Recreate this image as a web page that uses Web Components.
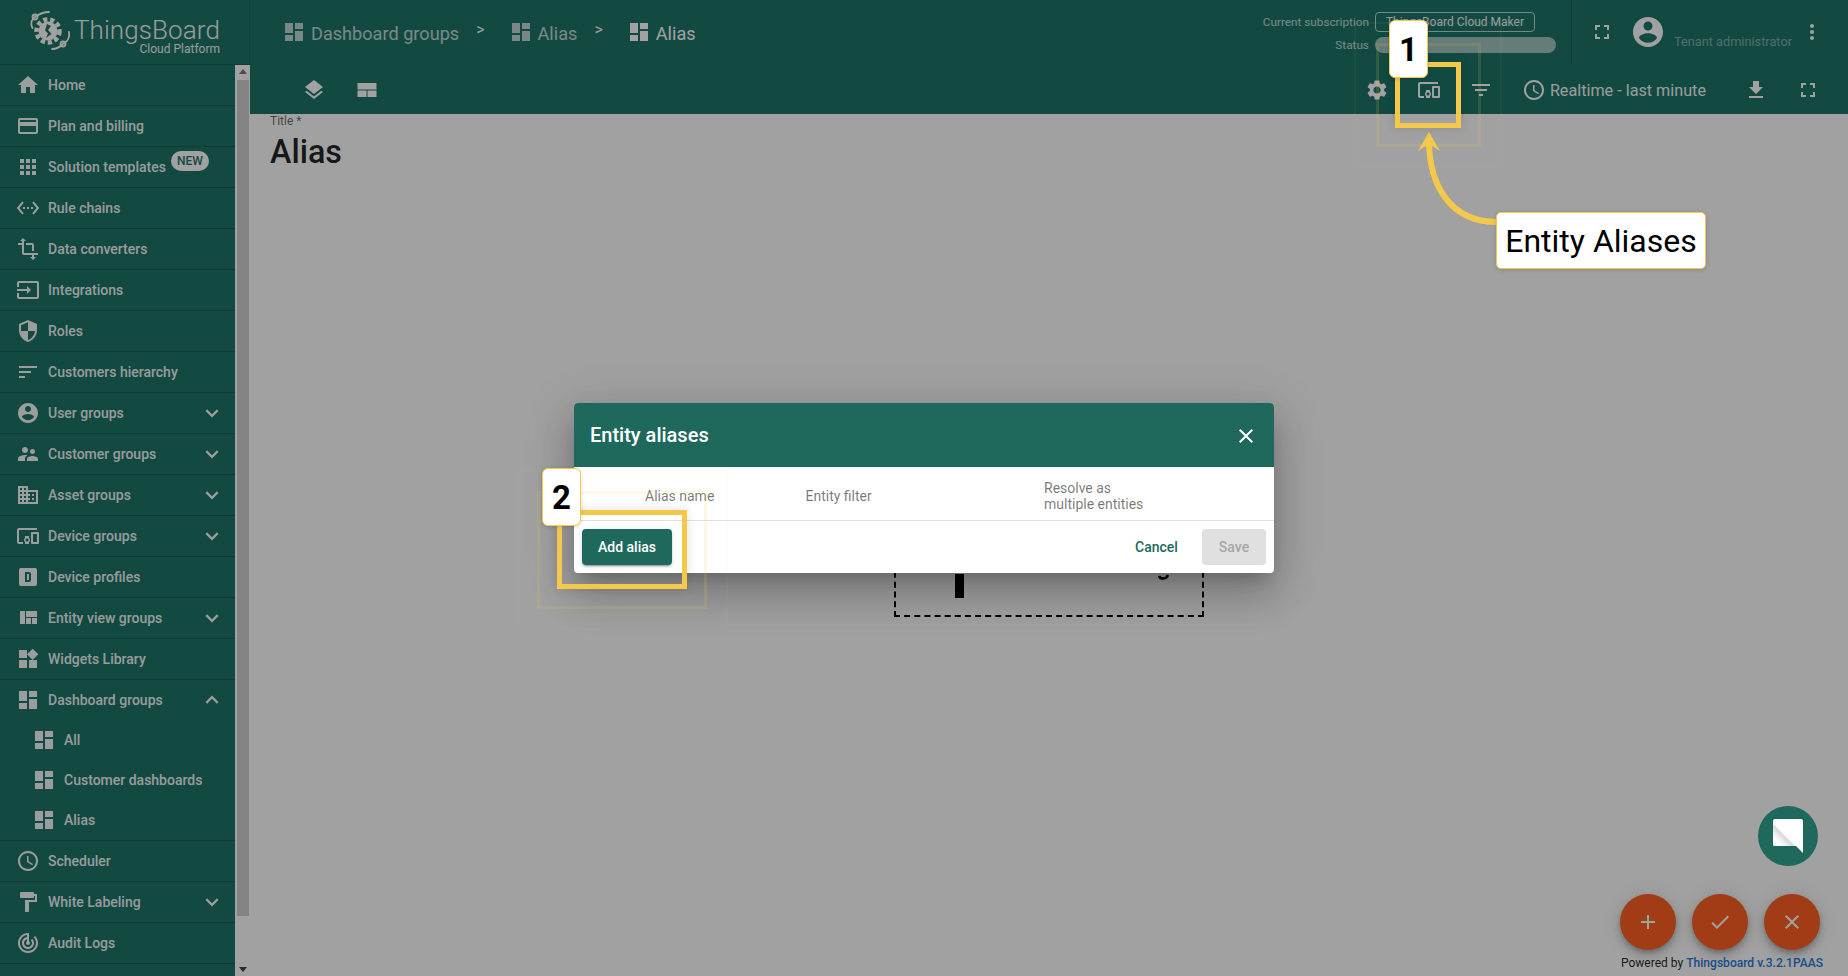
<!DOCTYPE html>
<html lang="en"><head><meta charset="utf-8"><title>Alias</title>
<style>
html,body{margin:0;padding:0;width:100%;height:100%;overflow:hidden;background:#fff;font-family:Roboto,"Liberation Sans",sans-serif}
</style></head><body>
<tb-app>
  <tb-sidebar>
    <tb-nav-item icon="home">Home</tb-nav-item>
    <tb-nav-item icon="card">Plan and billing</tb-nav-item>
    <tb-nav-item icon="apps" badge="NEW">Solution templates</tb-nav-item>
    <tb-nav-item icon="ethernet">Rule chains</tb-nav-item>
    <tb-nav-item icon="transform">Data converters</tb-nav-item>
    <tb-nav-item icon="input">Integrations</tb-nav-item>
    <tb-nav-item icon="security">Roles</tb-nav-item>
    <tb-nav-item icon="sort">Customers hierarchy</tb-nav-item>
    <tb-nav-item icon="account" chevron="more">User groups</tb-nav-item>
    <tb-nav-item icon="supervisor" chevron="more">Customer groups</tb-nav-item>
    <tb-nav-item icon="domain" chevron="more">Asset groups</tb-nav-item>
    <tb-nav-item icon="devices" chevron="more">Device groups</tb-nav-item>
    <tb-nav-item icon="dbox">Device profiles</tb-nav-item>
    <tb-nav-item icon="quilt" chevron="more">Entity view groups</tb-nav-item>
    <tb-nav-item icon="widgets">Widgets Library</tb-nav-item>
    <tb-nav-item icon="dashboard" chevron="less" flush>Dashboard groups</tb-nav-item>
    <tb-nav-item icon="dashboard" nested flush>All</tb-nav-item>
    <tb-nav-item icon="dashboard" nested flush>Customer dashboards</tb-nav-item>
    <tb-nav-item icon="dashboard" nested>Alias</tb-nav-item>
    <tb-nav-item icon="schedule">Scheduler</tb-nav-item>
    <tb-nav-item icon="paint" chevron="more">White Labeling</tb-nav-item>
    <tb-nav-item icon="track">Audit Logs</tb-nav-item>
    <tb-nav-item icon="card"></tb-nav-item>
  </tb-sidebar>
  <tb-toolbar></tb-toolbar>
  <tb-content></tb-content>
  <tb-backdrop></tb-backdrop>
  <tb-dialog></tb-dialog>
  <tb-chat></tb-chat>
  <tb-annotations></tb-annotations>
</tb-app>
<script>
const P={
home:'M10 20v-6h4v6h5v-8h3L12 3 2 12h3v8z',
card:'M20 4H4c-1.11 0-1.99.89-1.99 2L2 18c0 1.11.89 2 2 2h16c1.11 0 2-.89 2-2V6c0-1.11-.89-2-2-2zm0 14H4v-6h16v6zm0-10H4V6h16v2z',
apps:'M4 8h4V4H4v4zm6 12h4v-4h-4v4zm-6 0h4v-4H4v4zm0-6h4v-4H4v4zm6 0h4v-4h-4v4zm6-10v4h4V4h-4zm-6 4h4V4h-4v4zm6 6h4v-4h-4v4zm0 6h4v-4h-4v4z',
ethernet:'M7.77 6.76L6.23 5.48.82 12l5.41 6.52 1.54-1.28L3.42 12l4.35-5.24zM7 13h2v-2H7v2zm10-2h-2v2h2v-2zm-6 2h2v-2h-2v2zm6.77-7.52l-1.54 1.28L20.58 12l-4.35 5.24 1.54 1.28L23.18 12l-5.41-6.52z',
transform:'M22 18v-2H8V4h2L7 1 4 4h2v2H2v2h4v8c0 1.1.9 2 2 2h8v2h-2l3 3 3-3h-2v-2h4zM10 8h6v6h2V8c0-1.1-.9-2-2-2h-6v2z',
input:'M21 3.01H3c-1.1 0-2 .9-2 2V9h2V4.99h18v14.03H3V15H1v4.01c0 1.1.9 1.98 2 1.98h18c1.1 0 2-.88 2-1.98v-14c0-1.11-.9-2-2-2zM11 16l4-4-4-4v3H1v2h10v3z',
security:'M12 1L3 5v6c0 5.55 3.84 10.74 9 12 5.16-1.26 9-6.45 9-12V5l-9-4zm0 10.99h7c-.53 4.12-3.28 7.79-7 8.94V12H5V6.3l7-3.11v8.8z',
sort:'M3 18h6v-2H3v2zM3 6v2h18V6H3zm0 7h12v-2H3v2z',
account:'M12 2C6.48 2 2 6.48 2 12s4.48 10 10 10 10-4.48 10-10S17.52 2 12 2zm0 3c1.66 0 3 1.34 3 3s-1.34 3-3 3-3-1.34-3-3 1.34-3 3-3zm0 14.2c-2.5 0-4.71-1.28-6-3.22.03-1.99 4-3.08 6-3.08 1.99 0 5.97 1.09 6 3.08-1.29 1.94-3.5 3.22-6 3.22z',
supervisor:'M16.5 12c1.38 0 2.49-1.12 2.49-2.5S17.88 7 16.5 7C15.12 7 14 8.12 14 9.5s1.12 2.5 2.5 2.5zM9 11c1.66 0 2.99-1.34 2.99-3S10.66 5 9 5C7.34 5 6 6.34 6 8s1.34 3 3 3zm7.5 3c-1.83 0-5.5.92-5.5 2.75V19h11v-2.25c0-1.83-3.67-2.75-5.5-2.75zM9 13c-2.33 0-7 1.17-7 3.5V19h7v-2.25c0-.85.33-2.34 2.37-3.47C10.5 13.1 9.66 13 9 13z',
domain:'M12 7V3H2v18h20V7H10zM6 19H4v-2h2v2zm0-4H4v-2h2v2zm0-4H4V9h2v2zm0-4H4V5h2v2zm4 12H8v-2h2v2zm0-4H8v-2h2v2zm0-4H8V9h2v2zm0-4H8V5h2v2zm10 12h-8v-2h2v-2h-2v-2h2v-2h-2V9h8v10zm-2-8h-2v2h2v-2zm0 4h-2v2h2v-2z',
devices:'M3 6h18V4H3c-1.1 0-2 .9-2 2v12c0 1.1.9 2 2 2h4v-2H3V6zm10 6H9v1.78c-.61.55-1 1.33-1 2.22s.39 1.67 1 2.22V20h4v-1.78c.61-.55 1-1.34 1-2.22s-.39-1.67-1-2.22V12zm-2 5.5c-.83 0-1.5-.67-1.5-1.5s.67-1.5 1.5-1.5 1.5.67 1.5 1.5-.67 1.5-1.5 1.5zM22 8h-6c-.5 0-1 .5-1 1v10c0 .5.5 1 1 1h6c.5 0 1-.5 1-1V9c0-.5-.5-1-1-1zm-1 10h-4v-8h4v8z',
dbox:'M9 7v10h4a2 2 0 002-2V9a2 2 0 00-2-2H9m2 2h2v6h-2V9M5 3h14a2 2 0 012 2v14a2 2 0 01-2 2H5a2 2 0 01-2-2V5a2 2 0 012-2z',
quilt:'M10 18h5v-6h-5v6zm-6 0h5V5H4v13zm12 0h5v-6h-5v6zM10 5v6h11V5H10z',
widgets:'M13 13v8h8v-8h-8zM3 21h8v-8H3v8zM3 3v8h8V3H3zm13.66-1.31L11 7.34 16.66 13l5.66-5.66-5.66-5.65z',
dashboard:'M3 13h8V3H3v10zm0 8h8v-6H3v6zm10 0h8V11h-8v10zm0-18v6h8V3h-8z',
schedule:'M11.99 2C6.47 2 2 6.48 2 12s4.47 10 9.99 10C17.52 22 22 17.52 22 12S17.52 2 11.99 2zM12 20c-4.42 0-8-3.58-8-8s3.58-8 8-8 8 3.58 8 8-3.58 8-8 8zm.5-13H11v6l5.25 3.15.75-1.23-4.5-2.67z',
paint:'M18 4V3c0-.55-.45-1-1-1H5c-.55 0-1 .45-1 1v4c0 .55.45 1 1 1h12c.55 0 1-.45 1-1V6h1v4H9v11c0 .55.45 1 1 1h2c.55 0 1-.45 1-1v-9h8V4h-3z',
track:'M19.07 4.93l-1.41 1.41C19.1 7.79 20 9.79 20 12c0 4.42-3.58 8-8 8s-8-3.58-8-8c0-4.08 3.05-7.44 7-7.93v2.02C8.16 6.57 6 9.03 6 12c0 3.31 2.69 6 6 6s6-2.69 6-6c0-1.66-.67-3.16-1.76-4.24l-1.41 1.41C15.55 9.9 16 10.9 16 12c0 2.21-1.79 4-4 4s-4-1.79-4-4c0-1.86 1.28-3.41 3-3.86v2.14c-.6.35-1 .98-1 1.72 0 1.1.9 2 2 2s2-.9 2-2c0-.74-.4-1.38-1-1.72V2h-1C6.48 2 2 6.48 2 12s4.48 10 10 10 10-4.48 10-10c0-2.76-1.12-5.26-2.93-7.07z',
more:'M16.900 8.300L12 13.200 7.100 8.300 5.500 10l6.500 6.500 6.500-6.500z',
less:'M12 7.500L5.500 14l1.600 1.700 4.900-4.900 4.900 4.900 1.600-1.700z',
layers:'M11.99 18.54l-7.37-5.73L3 14.07l9 7 9-7-1.63-1.27-7.38 5.74zM12 16l7.36-5.73L21 9l-9-7-9 7 1.63 1.27L12 16z',
compact:'M2.5 5h19v6.4h-19zM2.5 12.6h9V19h-9zM12.5 12.6h9V19h-9z',
settings:'M19.14 12.94c.04-.3.06-.61.06-.94 0-.32-.02-.64-.07-.94l2.03-1.58c.18-.14.23-.41.12-.61l-1.92-3.32c-.12-.22-.37-.29-.59-.22l-2.39.96c-.5-.38-1.03-.7-1.62-.94l-.36-2.54c-.04-.24-.24-.41-.48-.41h-3.84c-.24 0-.43.17-.47.41l-.36 2.54c-.59.24-1.13.57-1.62.94l-2.39-.96c-.22-.08-.47 0-.59.22L2.74 8.87c-.12.21-.08.47.12.61l2.03 1.58c-.05.3-.09.63-.09.94s.02.64.07.94l-2.03 1.58c-.18.14-.23.41-.12.61l1.92 3.32c.12.22.37.29.59.22l2.39-.96c.5.38 1.03.7 1.62.94l.36 2.54c.05.24.24.41.48.41h3.84c.24 0 .44-.17.47-.41l.36-2.54c.59-.24 1.13-.56 1.62-.94l2.39.96c.22.08.47 0 .59-.22l1.92-3.32c.12-.22.07-.47-.12-.61l-2.01-1.58zM12 15.6c-1.98 0-3.6-1.62-3.6-3.6s1.62-3.6 3.6-3.6 3.6 1.62 3.6 3.6-1.62 3.6-3.6 3.6z',
filter:'M10 18h4v-2h-4v2zM3 6v2h18V6H3zm3 7h12v-2H6v2z',
download:'M19 9h-4V3H9v6H5l7 7 7-7zM5 18v2h14v-2H5z',
fullscreen:'M7 14H5v5h5v-2H7v-3zm-2-4h2V7h3V5H5v5zm12 7h-3v2h5v-5h-2v3zM14 5v2h3v3h2V5h-5z',
dots:'M12 8c1.1 0 2-.9 2-2s-.9-2-2-2-2 .9-2 2 .9 2 2 2zm0 2c-1.1 0-2 .9-2 2s.9 2 2 2 2-.9 2-2-.9-2-2-2zm0 6c-1.1 0-2 .9-2 2s.9 2 2 2 2-.9 2-2-.9-2-2-2z',
close:'M19 6.41L17.59 5 12 10.59 6.41 5 5 6.41 10.59 12 5 17.59 6.41 19 12 13.41 17.59 19 19 17.59 13.41 12z',
add:'M19 13h-6v6h-2v-6H5v-2h6V5h2v6h6v2z',
check:'M9 16.17L4.83 12l-1.42 1.41L9 19 21 7l-1.41-1.41z'
};
const def=(n,fn)=>customElements.define(n,class extends HTMLElement{
  connectedCallback(){ if(this.shadowRoot) return; const s=this.attachShadow({mode:'open'}); s.innerHTML=fn(this); }
});
def('tb-icon',h=>{const z=h.getAttribute('size')||24;return `<style>:host{display:inline-flex;flex:none;width:${z}px;height:${z}px;color:inherit}svg{display:block;width:100%;height:100%;fill:currentColor}</style><svg viewBox="0 0 24 24"><path fill-rule="evenodd" d="${P[h.getAttribute('name')]}"/></svg>`});
def('tb-app',()=>`<style>:host{display:grid;position:relative;width:100vw;height:100vh;overflow:hidden;grid-template-columns:250px 1fr;grid-template-rows:114px 1fr;font-family:Roboto,"Liberation Sans",sans-serif}</style><slot></slot>`);
def('tb-sidebar',()=>`<style>
:host{display:flex;flex-direction:column;grid-row:1/3;background:#1e7569;color:#fff;min-height:0;overflow:hidden}
.brand{flex:none;height:64px;border-bottom:1px solid rgba(0,0,0,.18);border-right:1px solid rgba(0,0,0,.1);display:flex;box-sizing:content-box}
.brand svg{margin:8px 0 0 24px;flex:none}
.bt{margin-left:-5px;width:145px;display:flex;flex-direction:column;align-items:flex-end;padding-top:15px;opacity:.95}
.n{font-size:26px;line-height:31px;font-weight:300;letter-spacing:.1px}
.s{font-size:12px;line-height:14px;margin-top:-4px;}
.body{flex:1;display:flex;min-height:0}
.nav{flex:none;width:235px;overflow:hidden}
.sb{flex:none;width:15px;background:#fff;display:flex;flex-direction:column;align-items:center;justify-content:space-between}
.th{position:absolute;margin-top:15px;width:12px;height:836px;background:#d2d2d2}
.sb i{display:block;width:0;height:0;border-left:4px solid transparent;border-right:4px solid transparent;margin:4px 0}
.up{border-bottom:5px solid #777}.dn{border-top:5px solid #444}
</style>
<div class="brand"><svg width="56" height="52" viewBox="0 0 56 52" fill="none" stroke="#fff">
<circle cx="24" cy="23" r="11.5" stroke-width="4.5" stroke-dasharray="4.2 2.8"/><circle cx="24" cy="23" r="9.5" fill="#fff" stroke="none"/>
<path d="M23 16l4 2-3 4 3.5 4-5.500 4 2-4.500-3-3z" fill="#1e7569" stroke="none"/>
<path d="M8.500 20C6 15 8 11 11 9c4-3 9-5 14-5M45 24c1 6-2 10-6 12-3 3-7 5-11 5" stroke-width="1.800" stroke-linecap="round"/>
<circle cx="11" cy="9" r="2.500" stroke-width="1.800"/><circle cx="39" cy="36" r="2.500" stroke-width="1.800"/></svg>
<div class="bt"><span class="n">ThingsBoard</span><span class="s">Cloud Platform</span></div></div>
<div class="body"><div class="nav"><slot></slot></div><div class="sb"><i class="up"></i><div class="th"></div><i class="dn"></i></div></div>`);
def('tb-nav-item',h=>{const c=h.getAttribute('chevron'),b=h.getAttribute('badge'),nest=h.hasAttribute('nested'),fl=h.hasAttribute('flush');
const pb=fl?2:(nest?1:0);
return `<style>
:host{display:flex;align-items:center;box-sizing:border-box;height:${nest?40:41}px;${fl?'':'border-bottom:1px solid rgba(0,0,0,.18);'}padding:0 0 ${pb}px ${nest?32:16}px;font-size:14px;font-weight:500;color:rgba(255,255,255,.96);white-space:nowrap}
.l{margin-left:8px}
.b{margin:0 0 12px 5px;width:38px;height:20px;border-radius:10px;background:#fff;color:#1e7569;font-size:12px;line-height:20px;text-align:center}
.c{margin-left:auto;margin-right:11px}
</style><tb-icon name="${h.getAttribute('icon')}"></tb-icon><span class="l"><slot></slot></span>${b?`<span class="b">${b}</span>`:''}${c?`<tb-icon class="c" name="${c}"></tb-icon>`:''}`});
def('tb-toolbar',()=>`<style>
:host{display:flex;flex-direction:column;background:#1e7569;color:#fff}
.r1{height:64px;display:flex;align-items:center;padding:0 24px 0 32px}
.r2{height:50px;display:flex;align-items:center;padding:2px 28px 0 52px;box-sizing:border-box}
.seg{display:flex;align-items:center;font-size:18.140px;gap:5px;opacity:.72;white-space:nowrap;padding-top:3px}
.seg tb-icon{margin-top:-3px}
.seg.on{opacity:1}
.sep{font-size:16px;margin:-6px 24px 0 17px;opacity:.95}
.sp{margin-left:auto}
.grid{align-self:flex-start;margin-top:12px;display:grid;grid-template-columns:auto 181px;column-gap:6px;row-gap:5px;align-items:center;font-size:12px;white-space:nowrap}
.lab{text-align:right;opacity:.72;font-size:11.750px}
.box{width:160px;height:20px;box-sizing:border-box;border:1px solid rgba(255,255,255,.75);border-radius:4px;line-height:18px;text-align:center;opacity:.95}
.bar{height:16px;border-radius:8px;background:rgba(255,255,255,.58)}
.div{width:1px;height:64px;background:rgba(0,0,0,.15);margin-left:15px;margin-right:18px}
.user{align-self:flex-end;margin:0 8px 15px 8px;font-size:12.750px;opacity:.42;white-space:nowrap}
.time{font-size:16.200px;margin-left:4px;white-space:nowrap;opacity:.95}
</style>
<div class="r1">
<div class="seg"><tb-icon name="dashboard"></tb-icon>Dashboard groups</div><span class="sep">&gt;</span>
<div class="seg"><tb-icon name="dashboard"></tb-icon>Alias</div><span class="sep">&gt;</span>
<div class="seg on"><tb-icon name="dashboard"></tb-icon>Alias</div>
<div class="sp"></div>
<div class="grid"><span class="lab">Current subscription</span><span class="box">ThingsBoard Cloud Maker</span><span class="lab">Status</span><div class="bar"></div></div>
<div class="div"></div>
<tb-icon name="fullscreen"></tb-icon>
<tb-icon name="account" size="36" style="margin-left:16px"></tb-icon>
<span class="user">Tenant administrator</span>
<tb-icon name="dots"></tb-icon>
</div>
<div class="r2">
<tb-icon name="layers"></tb-icon><tb-icon name="compact" style="margin-left:29px"></tb-icon>
<div class="sp"></div>
<tb-icon name="settings"></tb-icon><tb-icon name="devices" style="margin-left:28px"></tb-icon><tb-icon name="filter" style="margin-left:28px"></tb-icon>
<tb-icon name="schedule" style="margin-left:29px"></tb-icon><span class="time">Realtime - last minute</span>
<tb-icon name="download" style="margin-left:38px"></tb-icon><tb-icon name="fullscreen" style="margin-left:28px"></tb-icon>
</div>`);
def('tb-content',()=>`<style>
:host{display:block;position:relative;background:#fff;color:#000;min-height:0;overflow:hidden}
.t{position:absolute;left:20px;top:0}
.lb{font-size:12px;line-height:14px;color:rgba(0,0,0,.6)}
.h{font-size:32.300px;line-height:38px;font-weight:500;color:rgba(0,0,0,.87);margin-top:5px}
.c{height:100%;display:flex;align-items:center;justify-content:center}
.box{position:relative;box-sizing:border-box;width:310px;height:143px;border:2px dashed #000}
.bar{position:absolute;left:59px;top:98px;width:9px;height:24px;background:#000}
.fabs{position:absolute;right:28px;bottom:26px;display:flex;gap:16px}
.f{width:56px;height:56px;border-radius:50%;background:#ff5f24;color:#fff;display:flex;align-items:center;justify-content:center;box-shadow:0 3px 5px -1px rgba(0,0,0,.2),0 6px 10px 0 rgba(0,0,0,.14),0 1px 18px 0 rgba(0,0,0,.12)}
.p{position:absolute;right:25px;bottom:5px;font-size:12.050px;line-height:16px;color:rgba(0,0,0,.87);white-space:nowrap}
.p b{color:#2a7ad8;font-weight:500}
svg{position:absolute;left:261px;top:98px}
</style>
<div class="t"><div class="lb">Title *</div><div class="h">Alias</div></div>
<div class="c"><div class="box"><div class="bar"></div><svg width="14" height="8" viewBox="0 0 14 8"><path d="M2 2c1 3 7 4 9-1" fill="none" stroke="#000" stroke-width="2.500"/></svg></div></div>
<div class="fabs"><div class="f"><tb-icon name="add"></tb-icon></div><div class="f"><tb-icon name="check"></tb-icon></div><div class="f"><tb-icon name="close"></tb-icon></div></div>
<div class="p">Powered by <b>Thingsboard v.3.2.1PAAS</b></div>`);
def('tb-backdrop',()=>`<style>:host{position:absolute;inset:0;background:rgba(0,0,0,.37)}</style>`);
def('tb-dialog',()=>`<style>
:host{position:absolute;left:574px;top:403px;width:700px;height:170px;background:#fff;border-radius:4px;box-shadow:0 11px 15px -7px rgba(0,0,0,.2),0 24px 38px 3px rgba(0,0,0,.14),0 9px 46px 8px rgba(0,0,0,.12);display:flex;flex-direction:column;color:#000}
.hd{height:64px;display:flex;align-items:center;background:#1e695c;color:#fff;padding:0 16px;border-radius:4px 4px 0 0;font-size:20px;font-weight:500}
.hd tb-icon{margin-left:auto;margin-top:2px}
.th{height:53px;display:grid;grid-template-columns:160.500px 238.500px 1fr;padding-left:71px;align-items:center;font-size:14px;line-height:16px;color:rgba(0,0,0,.54);border-bottom:1px solid #e0e0e0}
.th span{padding-top:5px}
.ft{flex:1;display:flex;align-items:flex-start;padding:8px;gap:8px}
.btn{height:36px;border-radius:4px;font-size:14px;font-weight:500;line-height:36px;text-align:center;box-sizing:border-box}
.add{width:90px;background:#1e695c;color:#fff;box-shadow:0 3px 1px -2px rgba(0,0,0,.2),0 2px 2px 0 rgba(0,0,0,.14),0 1px 5px 0 rgba(0,0,0,.12)}
.can{width:75px;margin-left:auto;color:#1e695c}
.sav{width:64px;background:#e0e0e0;color:#a6a6a6}
</style>
<div class="hd">Entity aliases<tb-icon name="close"></tb-icon></div>
<div class="th"><span>Alias name</span><span>Entity filter</span><span>Resolve as<br>multiple entities</span></div>
<div class="ft"><div class="btn add">Add alias</div><div class="btn can">Cancel</div><div class="btn sav">Save</div></div>`);
def('tb-chat',()=>`<style>
:host{position:absolute;right:30px;top:806px;width:60px;height:60px;border-radius:50%;background:#1e695c;display:flex;align-items:center;justify-content:center}
svg{display:block}
</style><svg width="60" height="60" viewBox="0 0 60 60"><defs><linearGradient id="g" x1=".6" y1=".4" x2="0" y2="1"><stop offset="0" stop-color="#c8c8c8"/><stop offset=".65" stop-color="#fff"/></linearGradient></defs>
<path d="M17 13h26a2 2 0 012 2v32l-7-7H17a2 2 0 01-2-2V15a2 2 0 012-2z" fill="#fff"/><path d="M15 18l22 22H17a2 2 0 01-2-2z" fill="url(#g)"/></svg>`);
def('tb-annotations',()=>`<style>
:host{position:absolute;inset:0;pointer-events:none;font-family:Roboto,"Liberation Sans",sans-serif;color:#000}
.y,.f1,.f2{position:absolute;box-sizing:border-box}
.y{border:5px solid #f4c84a;box-shadow:0 0 10px rgba(0,0,0,.12)}
.f1{border:3px solid rgba(244,200,74,.14)}
.f2{border:2px solid rgba(244,200,74,.05)}
.num{position:absolute;box-sizing:border-box;width:39px;height:58px;background:#fff;border:1px solid #f4c84a;border-radius:6px;font-size:33px;font-weight:700;display:flex;align-items:center;justify-content:center;box-shadow:0 1px 4px rgba(0,0,0,.15)}
.lab{position:absolute;left:1496px;top:212px;width:210px;height:57px;box-sizing:border-box;background:#fff;border:1px solid #f4c84a;border-radius:5px;font-size:32px;display:flex;align-items:center;justify-content:center;white-space:nowrap;box-shadow:0 1px 5px rgba(0,0,0,.15)}
svg{position:absolute;left:0;top:0}
</style>
<div class="f2" style="left:1354px;top:22px;width:148px;height:146px"></div>
<div class="f1" style="left:1376px;top:43px;width:105px;height:104px"></div>
<div class="y" style="left:1395px;top:62px;width:66px;height:66px"></div>
<div class="num" style="left:1389px;top:20px">1</div>
<svg width="1848" height="976" viewBox="0 0 1848 976"><path d="M1497 222C1450 222 1429 185 1429 140" fill="none" stroke="#f4c84a" stroke-width="6"/><path d="M1429 132l11 19-11-7-11 7z" fill="#f4c84a"/></svg>
<div class="lab">Entity Aliases</div>
<div class="f2" style="left:517px;top:470px;width:211px;height:160px"></div>
<div class="f1" style="left:537px;top:491px;width:170px;height:118px"></div>
<div class="y" style="left:557px;top:510px;width:130px;height:79px"></div>
<div class="num" style="left:542px;top:468px">2</div>`);
</script>
</body></html>
